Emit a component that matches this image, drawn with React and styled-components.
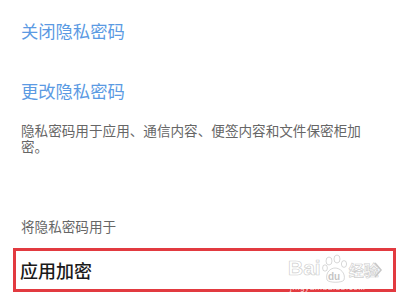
import React from "react";
import styled, { createGlobalStyle } from "styled-components";

const Global = createGlobalStyle`
  html, body { margin: 0; padding: 0; background: #ffffff; }
  body { font-family: "Noto Sans CJK SC", "Noto Sans", sans-serif; width: 406px; height: 308px; overflow: hidden; }
`;

const Page = styled.div`
  position: relative;
  width: 406px;
  height: 308px;
  display: flex;
  flex-direction: column;
  padding-top: 19px;
  box-sizing: border-box;
`;

const LinkTitle = styled.div`
  font-size: 17.3px;
  line-height: 24px;
  color: #5b9ae3;
  padding-left: 21px;
  margin-top: ${(p) => p.$mt || 0}px;
`;

const Desc = styled.div`
  font-size: 13.6px;
  line-height: 16px;
  color: #666666;
  padding: 0 40px 0 21px;
  margin-top: ${(p) => p.$mt || 0}px;
`;

const Row = styled.div`
  margin: 14px 10px 0 13px;
  height: 44px;
  box-sizing: border-box;
  border: 3px solid #e23a40;
  display: flex;
  align-items: center;
  justify-content: space-between;
  padding: 0 10px 0 4px;
`;

const RowLabel = styled.span`
  font-size: 18px;
  font-weight: 500;
  color: #1a1a1a;
`;

const ChevronWrap = styled.span`
  position: relative;
  z-index: 2;
  display: flex;
`;

const Watermark = styled.div`
  position: absolute;
  left: 288px;
  top: 252px;
  z-index: 1;
  display: flex;
  flex-direction: column;
  align-items: flex-start;
  pointer-events: none;
  color: rgba(255, 255, 255, 0.6);
  -webkit-text-stroke: 0.7px rgba(185, 185, 185, 0.7);
  font-family: "Liberation Sans", sans-serif;
`;

const WmTop = styled.div`
  display: flex;
  align-items: flex-end;
  gap: 1px;
  font-size: 21px;
  font-weight: bold;
  line-height: 32px;
`;

const WmCn = styled.span`
  font-family: "Noto Sans CJK SC", sans-serif;
  font-size: 15px;
  line-height: 28px;
`;

const WmUrl = styled.div`
  font-size: 7.5px;
  line-height: 8px;
  letter-spacing: 0.9px;
  margin-left: 2px;
  -webkit-text-stroke: 0;
  color: rgba(255, 255, 255, 0.85);
`;

const Chevron = () => (
  <svg width="10" height="18" viewBox="0 0 10 18">
    <path d="M2 2 L8 9 L2 16" fill="none" stroke="#c8c8c8" strokeWidth="1.6" />
  </svg>
);

const Paw = () => (
  <svg width="26" height="30" viewBox="0 0 26 30">
    <g fill="rgba(255,255,255,0.6)" stroke="rgba(185,185,185,0.7)" strokeWidth="0.8">
      <ellipse cx="7" cy="7" rx="3" ry="4" />
      <ellipse cx="15" cy="5" rx="3" ry="4" />
      <ellipse cx="22" cy="10" rx="2.6" ry="3.4" />
      <ellipse cx="3" cy="14" rx="2.4" ry="3.2" />
      <path d="M5 26 C3 18 9 14 13 14 C18 14 24 19 22 26 C20 29 7 29 5 26 Z" />
    </g>
    <text x="6" y="26" fontSize="10" fontFamily="Liberation Sans, sans-serif" fill="rgba(185,185,185,0.85)">du</text>
  </svg>
);

export default function App() {
  return (
    <>
      <Global />
      <Page>
        <LinkTitle>关闭隐私密码</LinkTitle>
        <LinkTitle $mt={36}>更改隐私密码</LinkTitle>
        <Desc $mt={19}>隐私密码用于应用、通信内容、便签内容和文件保密柜加密。</Desc>
        <Desc $mt={64}>将隐私密码用于</Desc>
        <Row>
          <RowLabel>应用加密</RowLabel>
          <ChevronWrap>
            <Chevron />
          </ChevronWrap>
        </Row>
        <Watermark>
          <WmTop>
            <span>Bai</span>
            <Paw />
            <WmCn>经验</WmCn>
          </WmTop>
          <WmUrl>jingyan.baidu.com</WmUrl>
        </Watermark>
      </Page>
    </>
  );
}
